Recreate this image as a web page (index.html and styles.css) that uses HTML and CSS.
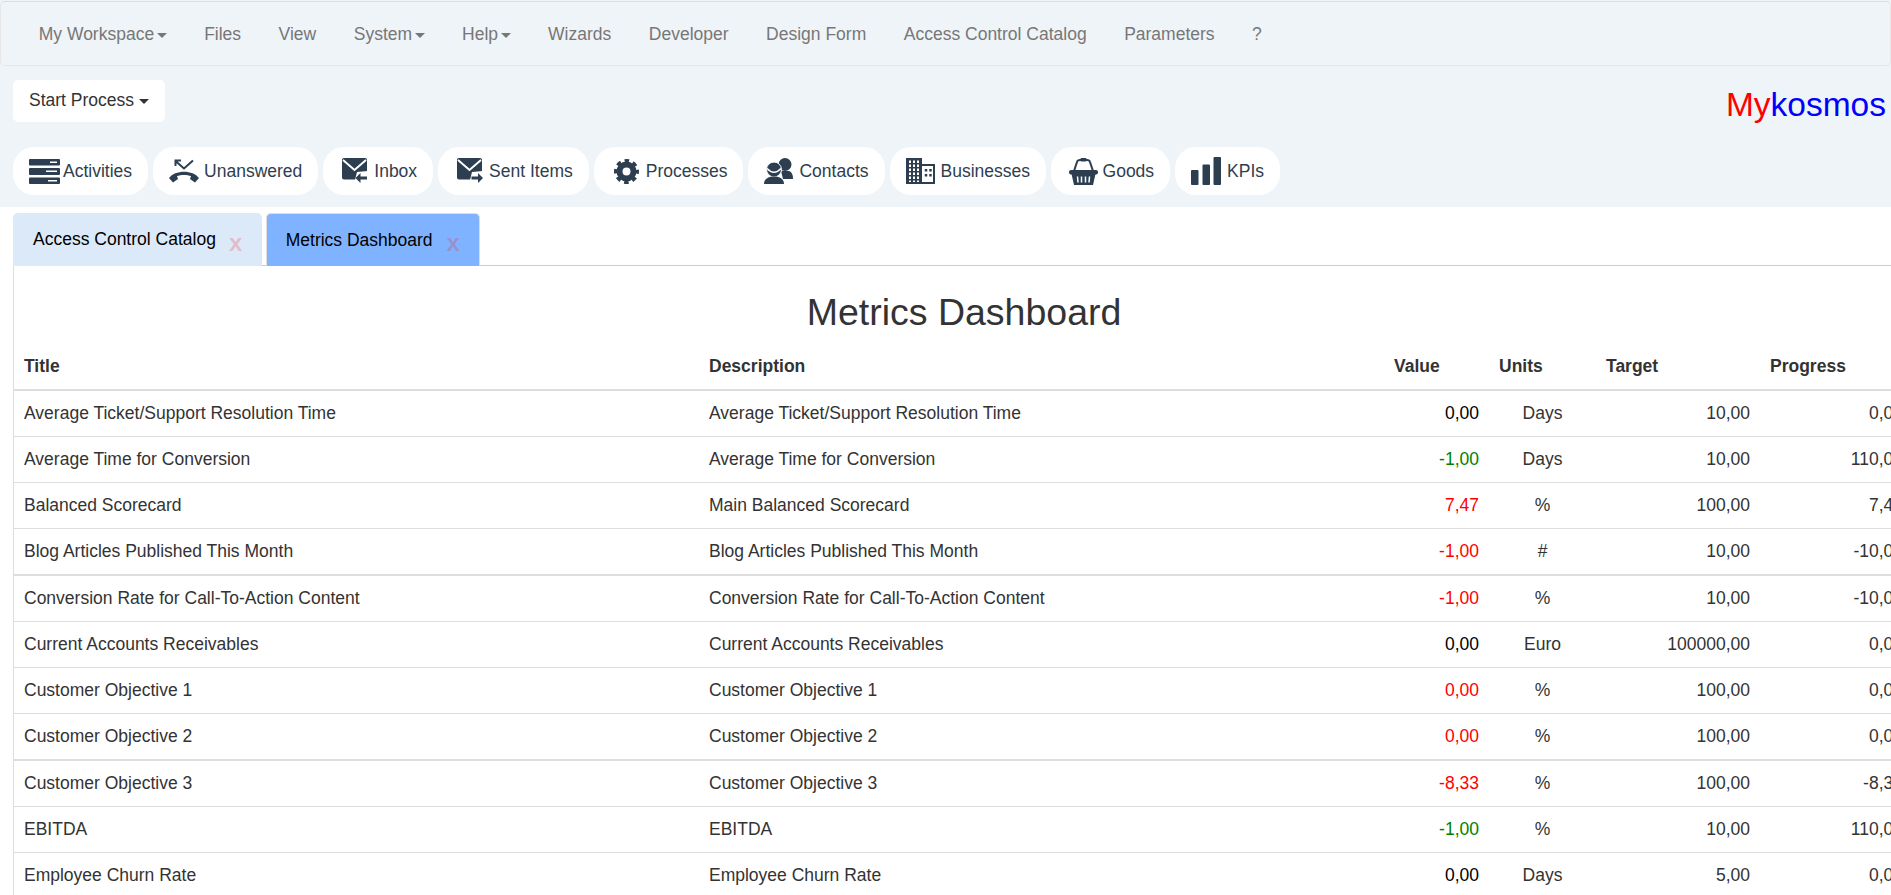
FILE: index.html
```html
<!DOCTYPE html>
<html lang="en">
<head>
    <meta charset="UTF-8">
    <title>Metrics Dashboard</title>
    <link rel="stylesheet" href="styles.css">
</head>
<body>
    <div class="top-area">
        <nav class="navbar">
            <a class="nav-item">My Workspace<span class="caret"></span></a>
            <a class="nav-item">Files</a>
            <a class="nav-item">View</a>
            <a class="nav-item">System<span class="caret"></span></a>
            <a class="nav-item">Help<span class="caret"></span></a>
            <a class="nav-item">Wizards</a>
            <a class="nav-item">Developer</a>
            <a class="nav-item">Design Form</a>
            <a class="nav-item">Access Control Catalog</a>
            <a class="nav-item">Parameters</a>
            <a class="nav-item">?</a>
        </nav>

        <div class="action-row">
            <button class="start-btn">Start Process <span class="caret caret-dark"></span></button>
            <div class="brand"><span class="brand-my">My</span><span class="brand-kosmos">kosmos</span></div>
        </div>

        <div class="pills">
            <a class="pill">
                <svg class="icon icon-servers" width="31" height="25" viewBox="0 0 31 25">
                    <rect y="0" width="31" height="6.5" rx="1"/>
                    <rect y="9" width="31" height="7" rx="1"/>
                    <rect y="18.5" width="31" height="6.5" rx="1"/>
                    <rect class="cut" x="21" y="2.5" width="7" height="1.5"/>
                    <rect class="cut" x="17" y="11.5" width="11" height="1.5"/>
                    <rect class="cut" x="19" y="21" width="9" height="1.5"/>
                </svg>
                Activities
            </a>
            <a class="pill">
                <svg class="icon" width="30" height="24" viewBox="0 0 30 24">
                    <path class="line" d="M12 1.5H6.5V7M6.500 2L15 9.500L24 1.500"/>
                    <path d="M0 19C6 10.500 24 10.500 30 19L26 23.500L21 20L22 17C18 15.500 12 15.500 8 17L9 20L4 23.500Z"/>
                </svg>
                Unanswered
            </a>
            <a class="pill">
                <svg class="icon icon-mail" width="26" height="26" viewBox="0 0 26 26">
                    <rect y="0" width="25" height="21.500" rx="2"/>
                    <path class="cut-line" d="M1 2L12.500 12L24 2"/>
                    <path class="cut" d="M12 26L15 14L26 13V26Z"/>
                    <path d="M13.500 20L18.500 15V18.500H25V21.500H18.500V25Z"/>
                </svg>
                Inbox
            </a>
            <a class="pill">
                <svg class="icon icon-mail" width="26" height="26" viewBox="0 0 26 26">
                    <rect y="0" width="25" height="21.500" rx="2"/>
                    <path class="cut-line" d="M1 2L12.500 12L24 2"/>
                    <path class="cut" d="M12 26L15 14L26 13V26Z"/>
                    <path d="M26 20L21 15V18.500H14.500V21.500H21V25Z"/>
                </svg>
                Sent Items
            </a>
            <a class="pill">
                <svg class="icon icon-gear" width="25" height="25" viewBox="0 0 25 25">
                    <circle class="gear-ring" cx="12.500" cy="12.500" r="7"/>
                    <circle class="gear-teeth" cx="12.500" cy="12.500" r="10.500"/>
                </svg>
                Processes
            </a>
            <a class="pill">
                <svg class="icon icon-wide-gap" width="29" height="26" viewBox="0 0 29 26">
                    <circle cx="21" cy="6.500" r="6.500"/>
                    <path d="M17 13H25C28 14 29 17 29 21H19Z"/>
                    <circle class="halo" cx="10" cy="11.500" r="7.500"/>
                    <path class="cut-line thin" d="M3 10.500Q10 18 17 10.500"/>
                    <path d="M0 26C0 21 4 18.500 10 18.500C16 18.500 20 21 20 26Z"/>
                </svg>
                Contacts
            </a>
            <a class="pill">
                <svg class="icon icon-wide-gap" width="29" height="26" viewBox="0 0 29 26">
                    <rect width="16" height="26"/>
                    <path class="window" d="M4 2.500V24M8 2.500V24M12 2.500V24"/>
                    <path class="line" d="M16 7H28V25H16"/>
                    <path class="dots" d="M20 11V21M24.500 11V21"/>
                </svg>
                Businesses
            </a>
            <a class="pill">
                <svg class="icon icon-basket" width="29" height="27" viewBox="0 0 29 27">
                    <path class="line" d="M5 13L8 4Q8.500 2 11 2H18Q20.500 2 21 4L24 13"/>
                    <rect x="11.500" y="0" width="6" height="3.500" rx="1"/>
                    <rect x="0" y="12" width="29" height="4.500" rx="2"/>
                    <path d="M2.500 16H26.500L24 27H5Z"/>
                    <path class="cut-line thin" d="M8.500 18.500L9 24.500M12.500 18.500V24.500M16.500 18.500V24.500M20.500 18.500L20 24.500"/>
                </svg>
                Goods
            </a>
            <a class="pill">
                <svg class="icon icon-wide-gap" width="30" height="28" viewBox="0 0 30 28">
                    <rect x="0" y="13" width="7.500" height="15" rx="1"/>
                    <rect x="11.500" y="7.500" width="7.500" height="20.500" rx="1"/>
                    <rect x="22.500" y="0" width="7.500" height="28" rx="1"/>
                </svg>
                KPIs
            </a>
        </div>
    </div>

    <div class="tabs">
        <div class="tab">Access Control Catalog<span class="tab-close">x</span></div>
        <div class="tab tab-active">Metrics Dashboard<span class="tab-close">x</span></div>
    </div>

    <div class="panel">
        <div class="panel-head">
            <h2>Metrics Dashboard</h2>
        </div>
        <table class="metrics">
            <colgroup>
                <col class="col-title">
                <col class="col-desc">
                <col class="col-value">
                <col class="col-units">
                <col class="col-target">
                <col class="col-progress">
            </colgroup>
            <thead>
                <tr>
                    <th>Title</th>
                    <th>Description</th>
                    <th>Value</th>
                    <th>Units</th>
                    <th>Target</th>
                    <th>Progress</th>
                </tr>
            </thead>
            <tbody>
                <tr>
                    <td>Average Ticket/Support Resolution Time</td>
                    <td>Average Ticket/Support Resolution Time</td>
                    <td class="num val-neutral">0,00</td>
                    <td class="units">Days</td>
                    <td class="num">10,00</td>
                    <td class="num">0,00</td>
                </tr>
                <tr>
                    <td>Average Time for Conversion</td>
                    <td>Average Time for Conversion</td>
                    <td class="num val-good">-1,00</td>
                    <td class="units">Days</td>
                    <td class="num">10,00</td>
                    <td class="num">110,00</td>
                </tr>
                <tr>
                    <td>Balanced Scorecard</td>
                    <td>Main Balanced Scorecard</td>
                    <td class="num val-bad">7,47</td>
                    <td class="units">%</td>
                    <td class="num">100,00</td>
                    <td class="num">7,47</td>
                </tr>
                <tr>
                    <td>Blog Articles Published This Month</td>
                    <td>Blog Articles Published This Month</td>
                    <td class="num val-bad">-1,00</td>
                    <td class="units">#</td>
                    <td class="num">10,00</td>
                    <td class="num">-10,00</td>
                </tr>
                <tr class="sep-thick">
                    <td>Conversion Rate for Call-To-Action Content</td>
                    <td>Conversion Rate for Call-To-Action Content</td>
                    <td class="num val-bad">-1,00</td>
                    <td class="units">%</td>
                    <td class="num">10,00</td>
                    <td class="num">-10,00</td>
                </tr>
                <tr>
                    <td>Current Accounts Receivables</td>
                    <td>Current Accounts Receivables</td>
                    <td class="num val-neutral">0,00</td>
                    <td class="units">Euro</td>
                    <td class="num">100000,00</td>
                    <td class="num">0,00</td>
                </tr>
                <tr>
                    <td>Customer Objective 1</td>
                    <td>Customer Objective 1</td>
                    <td class="num val-bad">0,00</td>
                    <td class="units">%</td>
                    <td class="num">100,00</td>
                    <td class="num">0,00</td>
                </tr>
                <tr>
                    <td>Customer Objective 2</td>
                    <td>Customer Objective 2</td>
                    <td class="num val-bad">0,00</td>
                    <td class="units">%</td>
                    <td class="num">100,00</td>
                    <td class="num">0,00</td>
                </tr>
                <tr class="sep-thick">
                    <td>Customer Objective 3</td>
                    <td>Customer Objective 3</td>
                    <td class="num val-bad">-8,33</td>
                    <td class="units">%</td>
                    <td class="num">100,00</td>
                    <td class="num">-8,33</td>
                </tr>
                <tr>
                    <td>EBITDA</td>
                    <td>EBITDA</td>
                    <td class="num val-good">-1,00</td>
                    <td class="units">%</td>
                    <td class="num">10,00</td>
                    <td class="num">110,00</td>
                </tr>
                <tr>
                    <td>Employee Churn Rate</td>
                    <td>Employee Churn Rate</td>
                    <td class="num val-neutral">0,00</td>
                    <td class="units">Days</td>
                    <td class="num">5,00</td>
                    <td class="num">0,00</td>
                </tr>
            </tbody>
        </table>
    </div>
</body>
</html>
```

FILE: styles.css
```css
html, body {
    height: 100%;
    overflow: hidden;
}
body {
    margin: 0;
    font-family: "Liberation Sans", Arial, sans-serif;
    font-size: 17.5px;
    line-height: 25px;
    color: #333;
    background: #fff;
}

/* top area */
.top-area {
    background: #eff4f8;
    padding: 1px 0 12px;
}
.navbar {
    display: flex;
    box-sizing: border-box;
    height: 65px;
    padding: 2px 19px 0;
    border: 1px solid #e7e7e7;
    border-top-color: #ddd;
    border-radius: 5px;
    align-items: center;
}
.nav-item {
    padding: 0 18.75px;
    color: #777;
    white-space: nowrap;
}
.caret {
    display: inline-block;
    margin-left: 2.5px;
    vertical-align: middle;
    border-top: 5px solid #777;
    border-left: 5px solid transparent;
    border-right: 5px solid transparent;
}
.caret-dark {
    border-top-color: #333;
    margin-left: 0;
}

.action-row {
    display: flex;
    height: 42px;
    justify-content: space-between;
    align-items: flex-start;
    margin: 14px 5px 0 13px;
}
.start-btn {
    height: 42px;
    padding: 0 15px 1px;
    border: 1px solid #fff;
    border-radius: 5px;
    background: #fff;
    color: #333;
    font: inherit;
}
.brand {
    font-size: 33.5px;
    line-height: 42px;
    margin-top: 4px;
}
.brand-my {
    color: #f00;
}
.brand-kosmos {
    color: #00f;
}

/* shortcut pills */
.pills {
    display: flex;
    gap: 5px;
    margin: 25px 0 0 13px;
}
.pill {
    display: flex;
    align-items: center;
    gap: 5px;
    height: 48px;
    padding: 0 16px;
    background: #fff;
    border-radius: 21px;
    white-space: nowrap;
    color: #2f3e4e;
}
.icon {
    fill: #2c3e50;
    flex: none;
}
.icon-servers {
    margin-right: -2px;
}
.icon-mail {
    margin: 0 1.5px 0 2.5px;
}
.icon-gear {
    margin: 0 2px 0 4px;
}
.icon-basket {
    margin-left: 1.5px;
}
.icon-wide-gap {
    margin-right: 1px;
}
.icon .cut {
    fill: #fff;
}
.icon .line {
    fill: none;
    stroke: #2c3e50;
    stroke-width: 2;
}
.icon .cut-line {
    fill: none;
    stroke: #fff;
    stroke-width: 2;
}
.icon .thin {
    stroke-width: 1.5;
}
.icon .halo {
    stroke: #fff;
    stroke-width: 1;
}
.icon .gear-ring {
    fill: none;
    stroke: #2c3e50;
    stroke-width: 6;
}
.icon .gear-teeth {
    fill: none;
    stroke: #2c3e50;
    stroke-width: 4;
    stroke-dasharray: 4.4 3.85;
    stroke-dashoffset: 2.2;
}
.icon .window {
    fill: none;
    stroke: #fff;
    stroke-width: 2;
    stroke-dasharray: 2.500 1.500;
}
.icon .dots {
    fill: none;
    stroke: #2c3e50;
    stroke-width: 2.500;
    stroke-dasharray: 2.500 2.500;
}

/* tabs */
.tabs {
    display: flex;
    gap: 4px;
    margin: 6px 0 0 13px;
    color: #000;
}
.tab {
    display: flex;
    box-sizing: border-box;
    height: 53px;
    padding: 0 19.5px 0 20px;
    align-items: center;
    background: #dce9f8;
    border-radius: 5px 5px 0 0;
    white-space: nowrap;
    margin-bottom: -1px;
    position: relative;
}
.tab-active {
    background: #80b3ff;
    border: 1px solid #ddd;
    border-bottom: 0;
    padding: 0 19px;
}
.tab-close {
    margin-left: 13px;
    padding-top: 5px;
    font-size: 24px;
    font-weight: bold;
    color: rgba(255, 0, 0, 0.2);
}
.tab-active .tab-close {
    margin-left: 14px;
}

/* panel with the table */
.panel {
    margin-left: 13px;
    width: 2000px;
    border-top: 1px solid #ccc;
    border-left: 1px solid #ddd;
}
.panel-head {
    width: 1900px;
    text-align: center;
}
.panel-head h2 {
    margin: 0;
    padding: 26px 0 11px;
    font-size: 37.5px;
    font-weight: 500;
    line-height: 41px;
    color: #333;
}
.metrics {
    table-layout: fixed;
    width: 1899px;
    border-collapse: separate;
    border-spacing: 0;
}
.col-title, .col-desc {
    width: 685px;
}
.col-value {
    width: 105px;
}
.col-units {
    width: 107px;
}
.col-target {
    width: 164px;
}
.col-progress {
    width: 153px;
}
.metrics th {
    padding: 10px;
    text-align: left;
    font-weight: bold;
    border-bottom: 2px solid #ddd;
}
.metrics td {
    padding: 10px;
    border-top: 1px solid #ddd;
}
.metrics tbody tr:first-child td {
    border-top: 0;
}
.metrics .sep-thick td {
    border-top-width: 2px;
}
.num {
    text-align: right;
}
.units {
    text-align: center;
}
.val-neutral {
    color: #000;
}
.val-good {
    color: #008000;
}
.val-bad {
    color: #f00;
}
```
